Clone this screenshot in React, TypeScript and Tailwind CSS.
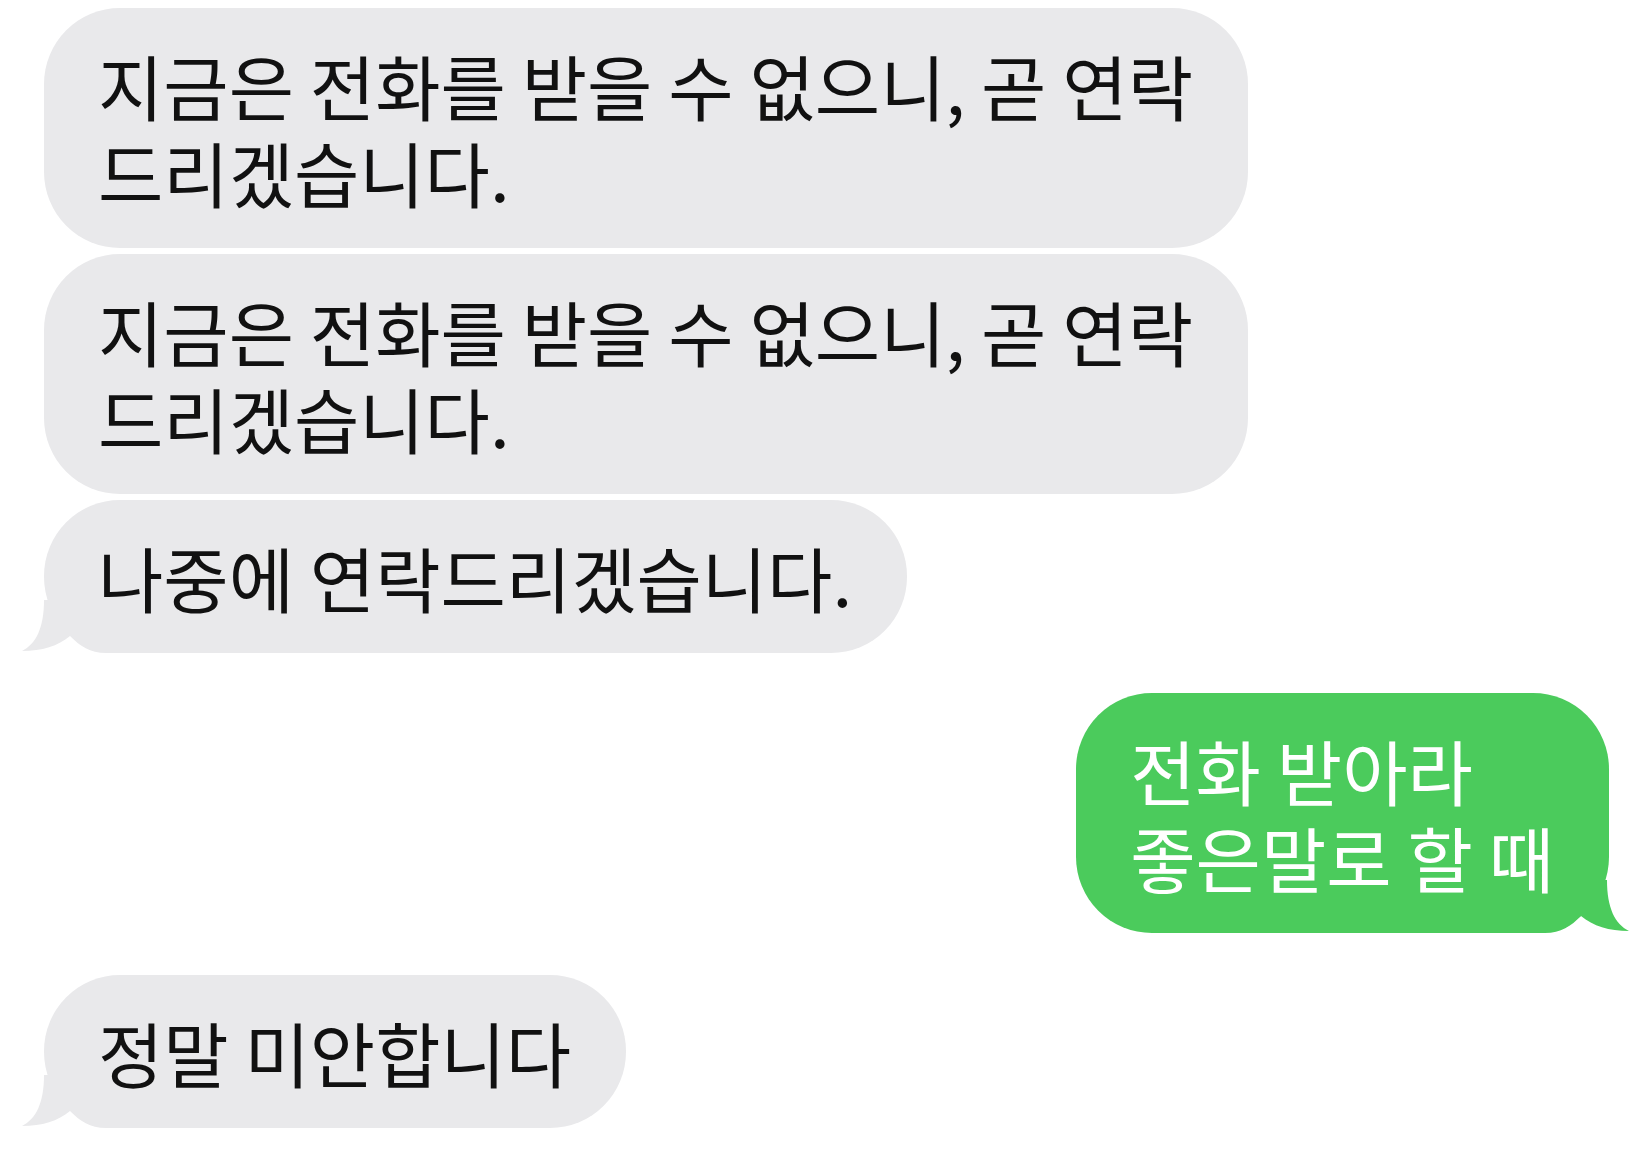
import React from 'react';

const GRAY = 'bg-[#e9e9eb]';

const Tail = ({ color, flip }: { color: string; flip?: boolean }) => (
  <svg
    width="120"
    height="53"
    viewBox="0 0 120 53"
    className={
      flip
        ? 'absolute bottom-0 right-[-20px] -scale-x-100'
        : 'absolute bottom-0 left-[-22px]'
    }
  >
    <path
      d="M22 0 C22 28 14 44 0 51 C20 51 36 46 48 36 C58 46 68 53 84 53 L120 53 L120 0 Z"
      fill={color}
    />
  </svg>
);

type Msg = {
  text: string;
  mine?: boolean;
  tail?: boolean;
  gap: string;
};

const messages: Msg[] = [
  { text: '지금은 전화를 받을 수 없으니, 곧 연락\n드리겠습니다.', gap: 'mt-[8px]' },
  { text: '지금은 전화를 받을 수 없으니, 곧 연락\n드리겠습니다.', gap: 'mt-[6px]' },
  { text: '나중에 연락드리겠습니다.', tail: true, gap: 'mt-[6px]' },
  { text: '전화 받아라\n좋은말로 할 때', mine: true, tail: true, gap: 'mt-[40px]' },
  { text: '정말 미안합니다', tail: true, gap: 'mt-[42px]' },
];

export default function App() {
  return (
    <div
      className="w-[1646px] h-[1150px] bg-white overflow-hidden flex flex-col"
      style={{ fontFamily: '"Noto Sans CJK KR", "Noto Sans", sans-serif' }}
    >
      {messages.map((m, i) => (
        <div
          key={i}
          className={`${m.gap} flex ${m.mine ? 'justify-end pr-[37px]' : 'justify-start pl-[44px]'}`}
        >
          <div
            className={`relative rounded-[76px] pl-[54px] pr-[55px] py-[33px] text-[71px] leading-[87px] ${
              m.mine ? 'bg-[#4bcb5c] text-white' : `${GRAY} text-[#111111]`
            }`}
          >
            {m.tail && <Tail color={m.mine ? '#4bcb5c' : '#e9e9eb'} flip={m.mine} />}
            <p className="relative whitespace-pre">{m.text}</p>
          </div>
        </div>
      ))}
    </div>
  );
}
